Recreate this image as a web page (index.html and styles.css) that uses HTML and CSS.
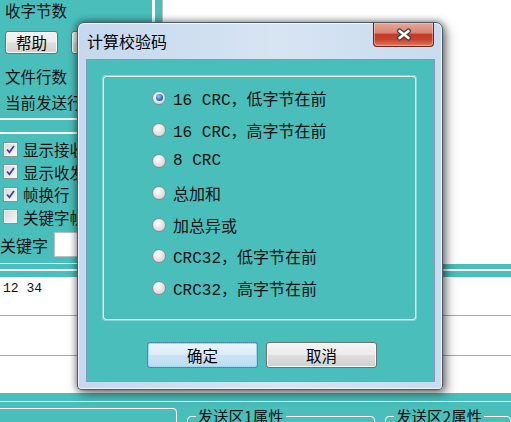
FILE: index.html
```html
<!DOCTYPE html>
<html lang="zh-CN">
<head>
    <meta charset="UTF-8">
    <meta name="viewport" content="width=device-width, initial-scale=1.0">
    <title>串口调试 - 计算校验码</title>
    <link rel="stylesheet" href="styles.css">
</head>
<body>
<div class="app">
    <div class="top">
        <div class="side">
            <div class="lbl">收字节数</div>
            <div class="btn-row">
                <button class="wbtn small">帮助</button>
                <button class="wbtn small"></button>
            </div>
            <div class="lbl lbl-files">文件行数</div>
            <div class="lbl lbl-line">当前发送行数</div>
            <div class="sep"></div>
            <div class="chk"><span class="box on"><svg viewBox="0 0 15 15"><path d="M3.5 7.5 L6.3 10.8 L11.5 3.5"/></svg></span>显示接收时间</div>
            <div class="chk"><span class="box on"><svg viewBox="0 0 15 15"><path d="M3.5 7.5 L6.3 10.8 L11.5 3.5"/></svg></span>显示收发字节</div>
            <div class="chk"><span class="box on"><svg viewBox="0 0 15 15"><path d="M3.5 7.5 L6.3 10.8 L11.5 3.5"/></svg></span>帧换行</div>
            <div class="chk"><span class="box"></span>关键字帧换行</div>
            <div class="kw">关键字<span class="input"></span></div>
        </div>
        <div class="divider"></div>
        <div class="recv"></div>
    </div>
    <div class="band"></div>
    <div class="send">
        <div class="send-row">12 34</div>
        <div class="send-row"></div>
        <div class="send-row last"></div>
    </div>
    <div class="bottom">
        <div class="groups">
            <fieldset class="grp g1"></fieldset>
            <fieldset class="grp g2"><legend>发送区1属性</legend></fieldset>
            <fieldset class="grp g3"><legend>发送区2属性</legend></fieldset>
        </div>
    </div>

    <!-- dialog on top of the main window -->
    <div class="dialog">
        <div class="dlg-title">
            <span>计算校验码</span>
            <button class="close">
                <svg viewBox="0 0 16 13" width="16" height="13">
                    <path class="x-out" d="M3.5 3 L12.5 10 M12.5 3 L3.5 10"/>
                    <path class="x-in" d="M3.5 3 L12.5 10 M12.5 3 L3.5 10"/>
                </svg>
            </button>
        </div>
        <div class="client">
            <div class="crc-group">
                <div class="radio-row"><span class="radio on"></span>16 CRC，低字节在前</div>
                <div class="radio-row"><span class="radio"></span>16 CRC，高字节在前</div>
                <div class="radio-row"><span class="radio"></span>8 CRC</div>
                <div class="radio-row"><span class="radio"></span>总加和</div>
                <div class="radio-row"><span class="radio"></span>加总异或</div>
                <div class="radio-row"><span class="radio"></span>CRC32，低字节在前</div>
                <div class="radio-row"><span class="radio"></span>CRC32，高字节在前</div>
            </div>
            <div class="dlg-buttons">
                <button class="wbtn default">确定</button>
                <button class="wbtn">取消</button>
            </div>
        </div>
    </div>
</div>
</body>
</html>
```
FILE: styles.css
```css
body {
    margin: 0;
    width: 511px;
    height: 422px;
    overflow: hidden;
    font-family: "Noto Sans CJK SC", sans-serif;
    font-size: 15.5px;
    color: #111;
    background: #4abeba;
}
.app { position: relative; width: 511px; height: 422px; }

/* main window */
.top { display: flex; height: 263px; }
.side {
    width: 152px;
    flex: none;
    padding-left: 5px;
    box-sizing: border-box;
    white-space: nowrap;
}
.lbl { height: 20px; line-height: 20px; }
.lbl-files { margin-top: 12px; }
.lbl-line { margin-top: 6px; }
.btn-row { display: flex; gap: 13px; margin-top: 11px; }
.wbtn {
    font-family: "Noto Sans CJK SC", sans-serif;
    font-size: 15.5px;
    color: #000;
    padding: 0;
    border: 1px solid #707070;
    border-radius: 3px;
    background: linear-gradient(#f4f4f4 0%, #ececec 48%, #dedede 52%, #d0d0d0 100%);
    box-shadow: inset 0 0 0 1px #fbfbfb;
    width: 111px;
    height: 26px;
    line-height: 22px;
}
.wbtn.small { width: 53px; height: 23px; line-height: 19px; flex: none; }
.wbtn.default {
    border-color: #3c7fb1;
    background: linear-gradient(#eaf5fc 0%, #dcedf8 48%, #cbe4f4 52%, #bcdcf0 100%);
    box-shadow: inset 0 0 0 1px #a6d4f0;
    outline: 1px dotted #5d95c4;
    outline-offset: -1px;
}
.sep {
    margin: 6px 0 0 -5px;
    height: 12px;
    border-top: 2px solid #fff;
    border-bottom: 2px solid #fff;
}
.chk {
    display: flex;
    align-items: center;
    gap: 5px;
    height: 22.5px;
    margin-left: -2px;
}
.sep + .chk { margin-top: 4px; }
.box {
    width: 15px;
    height: 15px;
    flex: none;
    box-sizing: border-box;
    border: 1px solid #8e8f8f;
    background: linear-gradient(135deg, #d8d8d8, #f8f8f8);
    box-shadow: inset 0 0 0 1px #f4f4f4;
}
.box svg { display: block; width: 13px; height: 13px; }
.box path { fill: none; stroke: #3a4797; stroke-width: 2; }
.kw {
    display: flex;
    align-items: center;
    gap: 6px;
    height: 25px;
    margin: 4px 0 0 -5px;
    font-size: 16px;
}
.input {
    width: 100px;
    height: 25px;
    box-sizing: border-box;
    background: #fff;
    border: 1px solid #b5c3c6;
}
.divider {
    width: 3px;
    flex: none;
    margin-right: 7px;
    background: #fff;
}
.recv { flex: 1; background: #fff; border-left: 1px solid #c2c2c2; }
.band {
    height: 14px;
    background: linear-gradient(to bottom, #fff 0 1px, transparent 1px 6px, #fff 6px 8px, transparent 8px);
}
.send { background: #fff; }
.send-row {
    height: 38px;
    border-bottom: 1px solid #a9a9a9;
    padding: 0 3px;
    font: 13px/24px "Liberation Mono", monospace;
}
.send-row + .send-row { height: 39px; }
.send-row.last { height: 37px; border-bottom: none; }
.bottom {
    height: 29px;
    box-sizing: border-box;
    padding-top: 8px;
    overflow: hidden;
}
.groups {
    display: flex;
    gap: 10px;
    margin-left: -10px;
    border-top: 1px solid #e6f6f5;
    padding-top: 6px;
}
.grp {
    margin: 0;
    padding: 0 8px;
    height: 30px;
    box-sizing: border-box;
    border: 1px solid #fff;
    border-radius: 4px;
    box-shadow: 0 1px 0 #3d9c99;
}
.g1 { width: 193px; }
.g2 { width: 195px; }
.g3 { width: 130px; }
.grp legend { padding: 0 2px; font-size: 15.5px; line-height: 16px; }

/* dialog */
.dialog {
    position: absolute;
    left: 77px;
    top: 22px;
    width: 366px;
    height: 368px;
    box-sizing: border-box;
    border: 1px solid #4a5868;
    border-radius: 7px 7px 4px 4px;
    background: linear-gradient(to right, #c5d8ee, #d7e4f2 55%, #c9dbef);
    box-shadow: inset 0 0 0 1px rgba(255,255,255,.75), 0 0 7px 1px rgba(0,0,0,.45), 4px 5px 12px rgba(0,0,0,.35);
    display: flex;
    flex-direction: column;
}
.dlg-title {
    height: 36px;
    flex: none;
    display: flex;
    justify-content: space-between;
    padding: 0 8px 0 9px;
}
.dlg-title span { align-self: center; font-size: 16px; line-height: 18px; color: #000; }
.close {
    width: 61px;
    height: 24px;
    padding: 0;
    border: 1px solid #6b2419;
    border-top: none;
    border-radius: 0 0 4px 4px;
    background: linear-gradient(#e7a696 0%, #d88574 42%, #c23c27 50%, #c7432d 72%, #dd7a5f 100%);
    box-shadow: inset 0 0 0 1px rgba(255,220,210,.45);
    display: flex;
    align-items: center;
    justify-content: center;
}
.close svg { display: block; }
.x-out { fill: none; stroke: #404040; stroke-width: 5; stroke-linecap: round; }
.x-in { fill: none; stroke: #fff; stroke-width: 2.6; stroke-linecap: round; }
.client {
    flex: 1;
    margin: 0 7px 7px 8px;
    background: #4abeba;
    border: 1px solid #7f9bbd;
    padding: 16px 0 0 16px;
}
.crc-group {
    width: 313px;
    height: 244px;
    box-sizing: border-box;
    border: 1px solid #fff;
    border-radius: 3px;
    box-shadow: 0 0 0 1px rgba(255,255,255,.35);
    padding: 5px 0 0 48px;
}
.radio-row {
    display: flex;
    align-items: center;
    gap: 7px;
    height: 31.7px;
    font: 16px "Liberation Mono", "Noto Sans CJK SC", monospace;
    color: #111;
    white-space: nowrap;
}
.radio {
    width: 14px;
    height: 14px;
    flex: none;
    box-sizing: border-box;
    border-radius: 50%;
    border: 1px solid #8b8d8d;
    background: radial-gradient(circle at 40% 35%, #fdfdfd, #dadada 70%, #cfcfcf);
    display: flex;
    align-items: center;
    justify-content: center;
}
.radio.on::after {
    content: "";
    width: 7px;
    height: 7px;
    border-radius: 50%;
    background: radial-gradient(circle at 40% 35%, #8fd0f7, #2a78c2 55%, #0d3e78);
}
.dlg-buttons {
    display: flex;
    gap: 8px;
    margin: 22px 0 0 44px;
}
```
